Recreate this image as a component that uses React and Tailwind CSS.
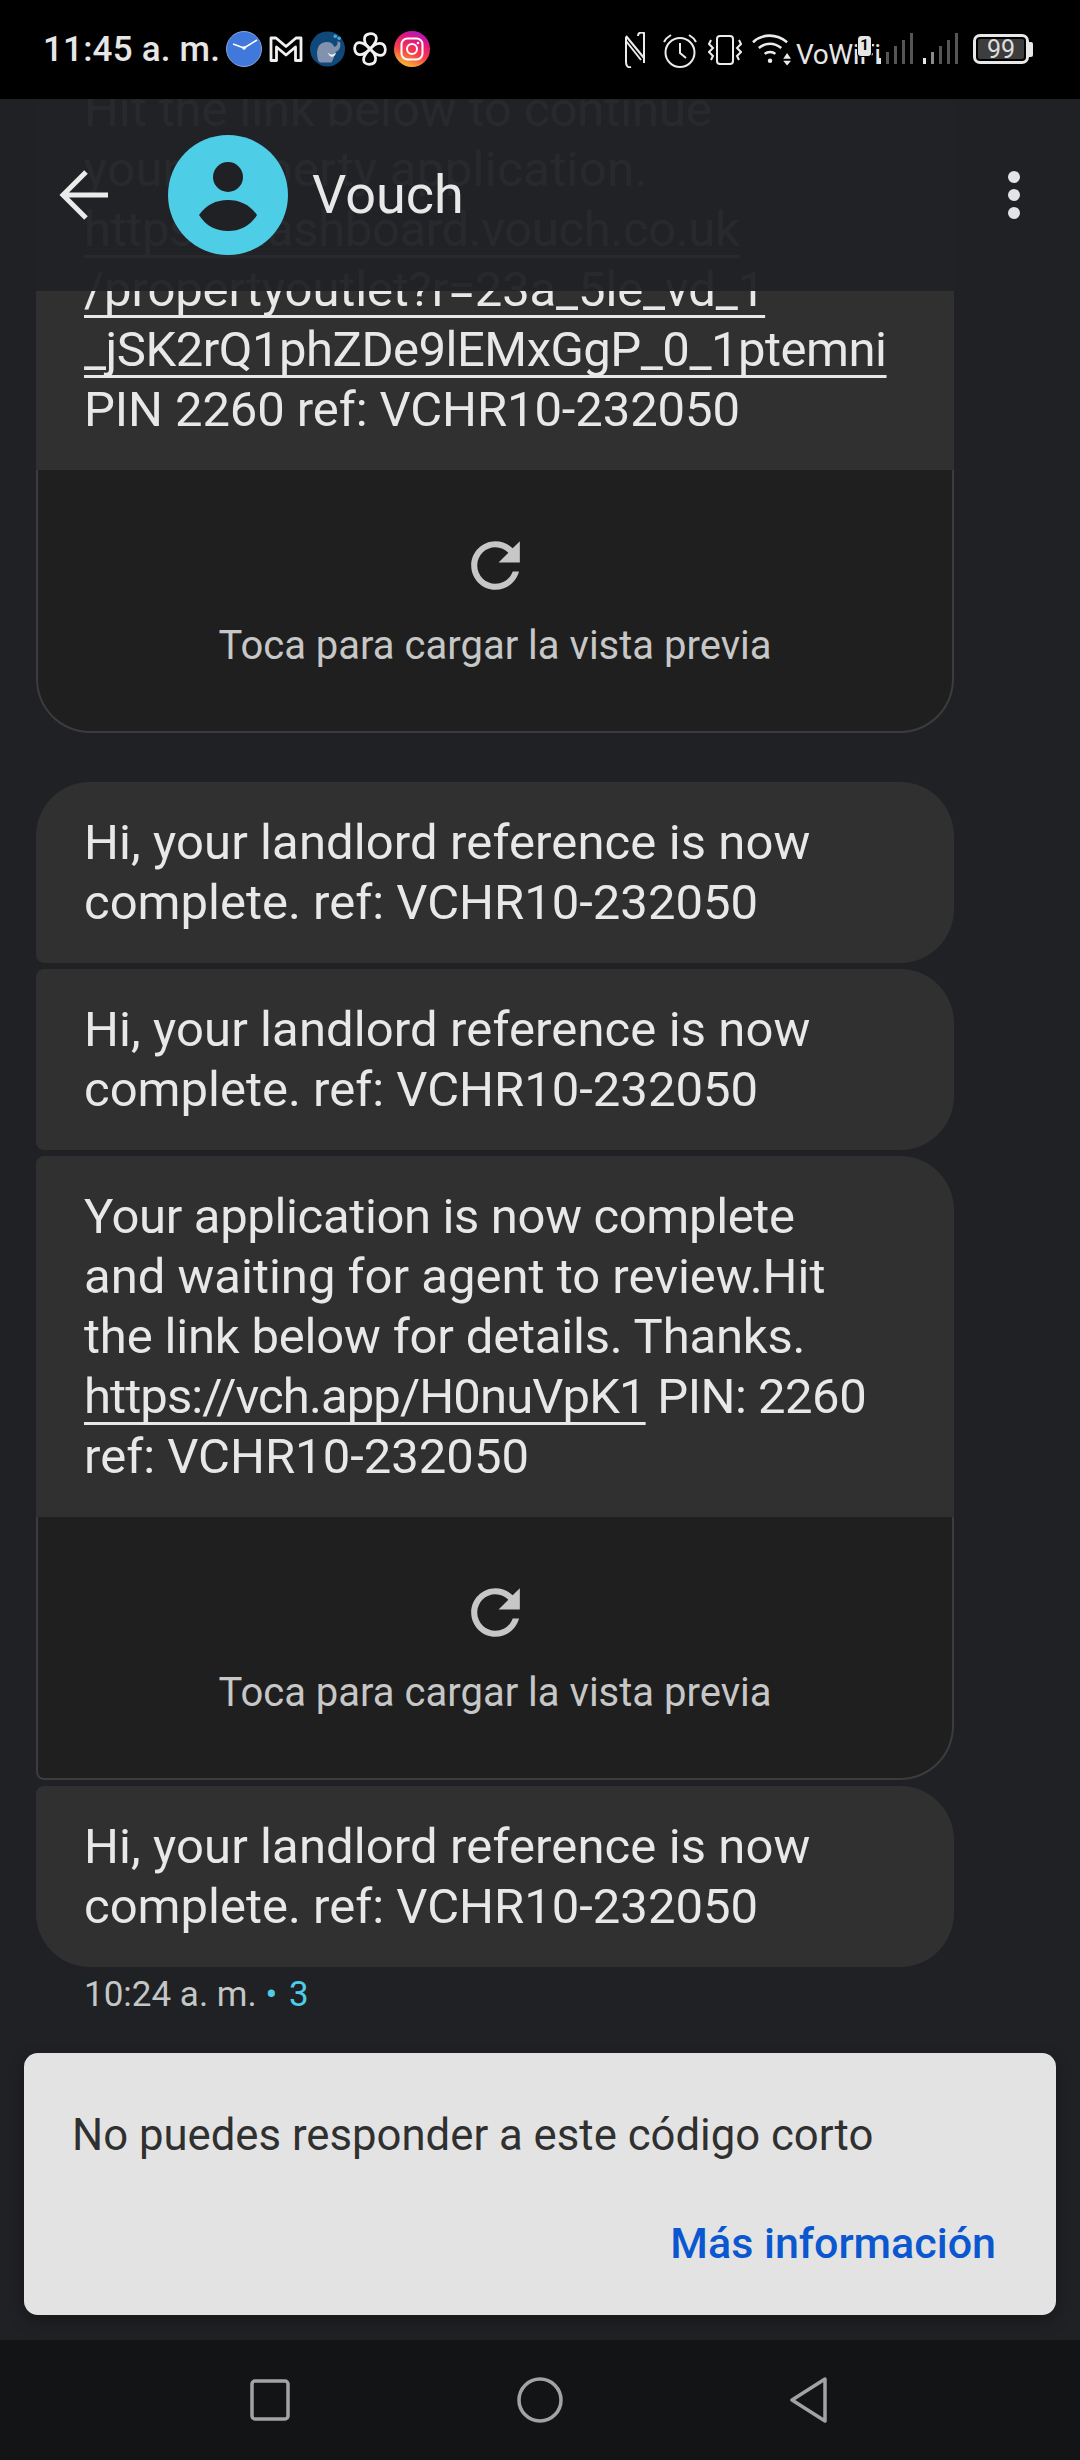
import React from "react";

const font = { fontFamily: "Roboto, sans-serif" };

function Reload() {
  return (
    <svg width="73" height="73" viewBox="0 0 24 24" fill="#c7c7c7">
      <path d="M17.65 6.35C16.2 4.9 14.21 4 12 4c-4.42 0-7.99 3.58-7.99 8s3.57 8 7.99 8c3.73 0 6.84-2.55 7.73-6h-2.08c-.82 2.33-3.04 4-5.65 4-3.31 0-6-2.69-6-6s2.69-6 6-6c1.66 0 3.14.69 4.22 1.78L13 11h7V4l-2.35 2.35z" />
    </svg>
  );
}

function Preview({ className }) {
  return (
    <div className={"h-[263px] bg-[#1f1f1f] border-x-2 border-b-2 border-[#3c3c3e] flex flex-col items-center pt-[59px] " + className}>
      <Reload />
      <div className="mt-[20px] text-[40px] leading-[48px] text-[#c7c7c7] whitespace-nowrap">Toca para cargar la vista previa</div>
    </div>
  );
}

function Line({ children, className = "" }) {
  return <div className={"whitespace-nowrap " + className}>{children}</div>;
}

function Link({ children, className = "" }) {
  return <span className={"underline underline-offset-[9px] decoration-[3px] [text-decoration-skip-ink:none] " + className}>{children}</span>;
}

function Bubble({ className, children }) {
  return <div className={"bg-[#303030] pl-[48px] pr-[30px] pt-[31px] pb-[30px] text-[49px] leading-[60px] text-[#e8e8e8] " + className}>{children}</div>;
}

function Reference({ className }) {
  return (
    <Bubble className={className}>
      <Line className="tracking-[0.1px]">Hi, your landlord reference is now</Line>
      <Line>complete. ref: VCHR10-232050</Line>
    </Bubble>
  );
}

function Signal({ second }) {
  return (
    <svg width="35" height="32" viewBox="0 0 35 32">
      <rect x="0" y="26" width="3" height="6" fill="#e8e8e8" />
      <rect x="8" y="20" width="3" height="12" fill={second ? "#8a8a8a" : "#555"} />
      <rect x="16" y="14" width="3" height="18" fill="#555" />
      <rect x="24" y="8" width="3" height="24" fill="#555" />
      <rect x="32" y="1" width="3" height="31" fill="#555" />
    </svg>
  );
}

function StatusBar() {
  const petal = "M17.5 18 C13 14 11 10 12 6 C13 2 20 1 23 4 C26 8 22 14 17.5 18 Z";
  return (
    <div className="h-[99px] bg-black shrink-0 flex items-start text-[#e6e6e6]">
      <div className="ml-[43px] w-[176px] mt-[29px] text-[35px] leading-[41px] font-medium whitespace-nowrap tracking-[0.2px]">11:45 a. m.</div>
      <div className="mt-[31px] ml-[7px] flex items-center gap-[7px]">
        <svg width="36" height="36" viewBox="0 0 36 36">
          <circle cx="18" cy="18" r="17.5" fill="#4178db" stroke="#86a5e0" strokeWidth="1" />
          <path d="M18 17 L7 13 M18 17 L31 9" stroke="#fff" strokeWidth="1.6" fill="none" />
          <circle cx="18" cy="17" r="1.8" fill="#fff" />
        </svg>
        <svg width="34" height="28" viewBox="0 0 34 28" fill="none">
          <path d="M2 3 H7 L17 11.5 L27 3 H32 V25.5 H26.5 V12 L17 20 L7.5 12 V25.5 H2 Z" stroke="#f0f0f0" strokeWidth="2.8" strokeLinejoin="round" />
        </svg>
        <svg width="35" height="36" viewBox="0 0 36 36">
          <circle cx="18" cy="18" r="18" fill="#11487a" />
          <path d="M8 28 C6 20 8 12 15 11 C20 10 24 12 25 16 C28 15 29 12 28 10 L31 11 C32 16 30 20 26 21 C25 25 24 29 22 32 L11 32 C9 31 8 30 8 28 Z" fill="#8092ad" />
          <path d="M18 21 C21 25 25 24 27 21 C26 27 20 28 18 21 Z" fill="#f2f2f2" />
          <circle cx="26" cy="5" r="1.8" fill="#4aa8e0" />
          <circle cx="30" cy="7" r="1.8" fill="#4aa8e0" />
        </svg>
        <svg className="ml-[1px]" width="34" height="36" viewBox="0 0 35 36" fill="none" stroke="#f2f2f2" strokeWidth="2.8" strokeLinejoin="round">
          <path d={petal} />
          <path d={petal} transform="rotate(90 17.5 18)" />
          <path d={petal} transform="rotate(180 17.5 18)" />
          <path d={petal} transform="rotate(270 17.5 18)" />
        </svg>
        <svg width="36" height="36" viewBox="0 0 36 36" fill="none">
          <defs>
            <linearGradient id="ig" x1="0.3" y1="1" x2="0.7" y2="0">
              <stop offset="0" stopColor="#fdc12d" />
              <stop offset="0.4" stopColor="#f5404b" />
              <stop offset="0.75" stopColor="#e0157e" />
              <stop offset="1" stopColor="#a81cc4" />
            </linearGradient>
          </defs>
          <circle cx="18" cy="18" r="18" fill="url(#ig)" />
          <rect x="7.5" y="7.5" width="21" height="21" rx="6" stroke="#fff" strokeWidth="2" />
          <circle cx="18" cy="18" r="5" stroke="#fff" strokeWidth="2" />
          <circle cx="24" cy="12" r="1.3" fill="#fff" />
        </svg>
      </div>
      <div className="flex-1" />
      <div className="mt-[32px] mr-[47px] flex items-start">
        <svg width="20" height="36" viewBox="0 0 20 36" fill="none" stroke="#ececec" strokeWidth="2">
          <path d="M1 4 L19 26 M1 9 L16 28 M19 31 L19 1 C15 0 13 1 13 4 M1 5 L1 30 C1 34 3 36 6 35" />
        </svg>
        <svg className="ml-[17px] mt-[2px]" width="36" height="34" viewBox="0 0 36 34" fill="none" stroke="#ececec" strokeWidth="2">
          <circle cx="18" cy="18.5" r="14.5" />
          <path d="M18 9 V19 L24 24" />
          <path d="M2 8 C3.5 5 5.5 3 9 1 M34 8 C32.5 5 30.5 3 27 1" />
        </svg>
        <svg className="ml-[10px] mt-[3px]" width="34" height="30" viewBox="0 0 34 30" fill="none" stroke="#ececec" strokeWidth="2">
          <rect x="9" y="1" width="16" height="28" rx="3" />
          <path d="M3 5 L1 9 L5 13 L1 17 L5 21 L3 25" />
          <path d="M31 5 L33 9 L29 13 L33 17 L29 21 L31 25" />
        </svg>
        <svg className="ml-[10px] mt-[2px]" width="39" height="32" viewBox="0 0 40 32" fill="none">
          <path d="M1 8 C11 -1 25 -1 36 8" stroke="#ececec" strokeWidth="2.6" />
          <path d="M7 14 C14 8 23 8 30 14" stroke="#ececec" strokeWidth="2.6" />
          <path d="M13 20 C16 17.5 21 17.5 24 20" stroke="#ececec" strokeWidth="2.6" />
          <circle cx="18.5" cy="27" r="2.3" fill="#ececec" />
          <path d="M36 19 L40 25 H32 Z M32 27 H40 L36 32 Z" fill="#ececec" />
        </svg>
        <div className="relative mt-[8px] ml-[5px] w-[75px] h-[30px] text-[28px] leading-[30px] text-[#e6e6e6] whitespace-nowrap tracking-[-0.4px]">
          VoWiFi
          <div className="absolute left-[61px] -top-[4px] w-[15px] h-[21px] bg-[#e6e6e6] border-x border-b border-black rounded-[4px] text-black text-[15px] leading-[18px] font-bold text-center tracking-normal">1</div>
        </div>
        <div className="ml-[7px]"><Signal /></div>
        <div className="ml-[10px]"><Signal second /></div>
        <div className="ml-[15px] mt-[2px] flex items-center">
          <div className="w-[56px] h-[30px] border-[3px] border-[#e8e8e8] rounded-[7px] p-[2px]">
            <div className="h-full bg-[#3d3d3d] rounded-[2px] flex items-center justify-center text-[25px] leading-none text-[#dedede]">99</div>
          </div>
          <div className="w-[4px] h-[15px] bg-[#e8e8e8] rounded-r-[2px]" />
        </div>
      </div>
    </div>
  );
}

function Header() {
  return (
    <div className="absolute inset-x-0 top-0 h-[192px] bg-[#202124]/[0.96] flex items-center">
      <svg className="ml-[59px]" width="50" height="50" viewBox="0 0 50 50" fill="none" stroke="#ebebeb" strokeWidth="5">
        <path d="M49 25 H5 M27 2 L4 25 L27 48" />
      </svg>
      <div className="ml-[59px] w-[120px] h-[120px] rounded-full bg-[#4ecde6] flex items-center justify-center">
        <svg width="120" height="120" viewBox="0 0 120 120" fill="#202124">
          <circle cx="60" cy="42" r="15" />
          <path d="M31 80 C38 70 48 65 60 65 C72 65 82 70 89 80 C82 91 72 96 60 96 C48 96 38 91 31 80 Z" />
        </svg>
      </div>
      <div className="ml-[24px] text-[54px] leading-[60px] text-[#e8e8e8]">Vouch</div>
      <div className="flex-1" />
      <div className="mr-[60px] flex flex-col gap-[6px]">
        <div className="w-[12px] h-[12px] rounded-full bg-[#e3e3e8]" />
        <div className="w-[12px] h-[12px] rounded-full bg-[#e3e3e8]" />
        <div className="w-[12px] h-[12px] rounded-full bg-[#e3e3e8]" />
      </div>
    </div>
  );
}

export default function App() {
  return (
    <div className="w-[1080px] h-[2460px] flex flex-col bg-[#202124] overflow-hidden" style={font}>
      <StatusBar />
      <div className="relative flex-1 overflow-hidden">
        <div className="-mt-[50px] ml-[36px] w-[918px] flex flex-col">
          <div>
            <Bubble>
              <Line className="tracking-[-0.1px]">Hit the link below to continue</Line>
              <Line className="tracking-[0.36px]">your property application.</Line>
              <Line className="tracking-[-0.38px]"><Link>https://dashboard.vouch.co.uk</Link></Line>
              <Line className="tracking-[-0.15px]"><Link>/propertyoutlet?r=23a_5le_vd_1</Link></Line>
              <Line><Link className="tracking-[-0.5px]">_jSK2rQ1phZDe9lEMxGgP_0_1ptemni</Link></Line>
              <Line className="-tracking-[0.1px]">PIN 2260 ref: VCHR10-232050</Line>
            </Bubble>
            <Preview className="rounded-b-[54px]" />
          </div>
          <Reference className="mt-[49px] rounded-[54px] rounded-bl-[8px]" />
          <Reference className="mt-[6px] rounded-[54px] rounded-l-[8px]" />
          <div className="mt-[6px]">
            <Bubble className="rounded-t-[54px] rounded-tl-[8px]">
              <Line className="tracking-[-0.35px]">Your application is now complete</Line>
              <Line>and waiting for agent to review.Hit</Line>
              <Line className="tracking-[-0.18px]">the link below for details. Thanks.</Line>
              <Line className="tracking-[-0.5px]"><Link className="tracking-[-0.9px]">https://vch.app/H0nuVpK1</Link> PIN: 2260</Line>
              <Line>ref: VCHR10-232050</Line>
            </Bubble>
            <Preview className="rounded-br-[54px] rounded-bl-[8px]" />
          </div>
          <Reference className="mt-[6px] rounded-[54px] rounded-tl-[8px]" />
        </div>
        <div className="ml-[84px] mt-[8px] text-[35px] leading-[40px] text-[#c4c7c5] whitespace-nowrap">
          10:24 a. m. <span className="text-[#4ecde6] tracking-[1.5px]">• 3</span>
        </div>
        <div className="mt-[38px] mx-[24px] h-[262px] bg-[#e3e3e3] rounded-[14px] shadow-[0_6px_16px_rgba(0,0,0,0.3)] pl-[48px] pr-[60px] pt-[57px] flex flex-col">
          <div className="text-[43.7px] leading-[50px] text-[#303030] whitespace-nowrap">No puedes responder a este código corto</div>
          <div className="mt-[58px] self-end text-[43px] leading-[50px] font-medium text-[#0b57d0] whitespace-nowrap">Más información</div>
        </div>
        <Header />
      </div>
      <div className="h-[120px] shrink-0 bg-[#131416] flex items-center justify-center gap-[227px] pr-[3px]">
        <svg width="40" height="42" viewBox="0 0 40 42" fill="none" stroke="#a3a3a3" strokeWidth="3.5">
          <rect x="2" y="2" width="36" height="38" rx="3" />
        </svg>
        <svg width="46" height="46" viewBox="0 0 46 46" fill="none" stroke="#a3a3a3" strokeWidth="3.5">
          <circle cx="23" cy="23" r="21" />
        </svg>
        <svg width="37" height="46" viewBox="0 0 37 46" fill="none" stroke="#a3a3a3" strokeWidth="3.5" strokeLinejoin="round">
          <path d="M35 2 L2 23 L35 44 Z" />
        </svg>
      </div>
    </div>
  );
}
